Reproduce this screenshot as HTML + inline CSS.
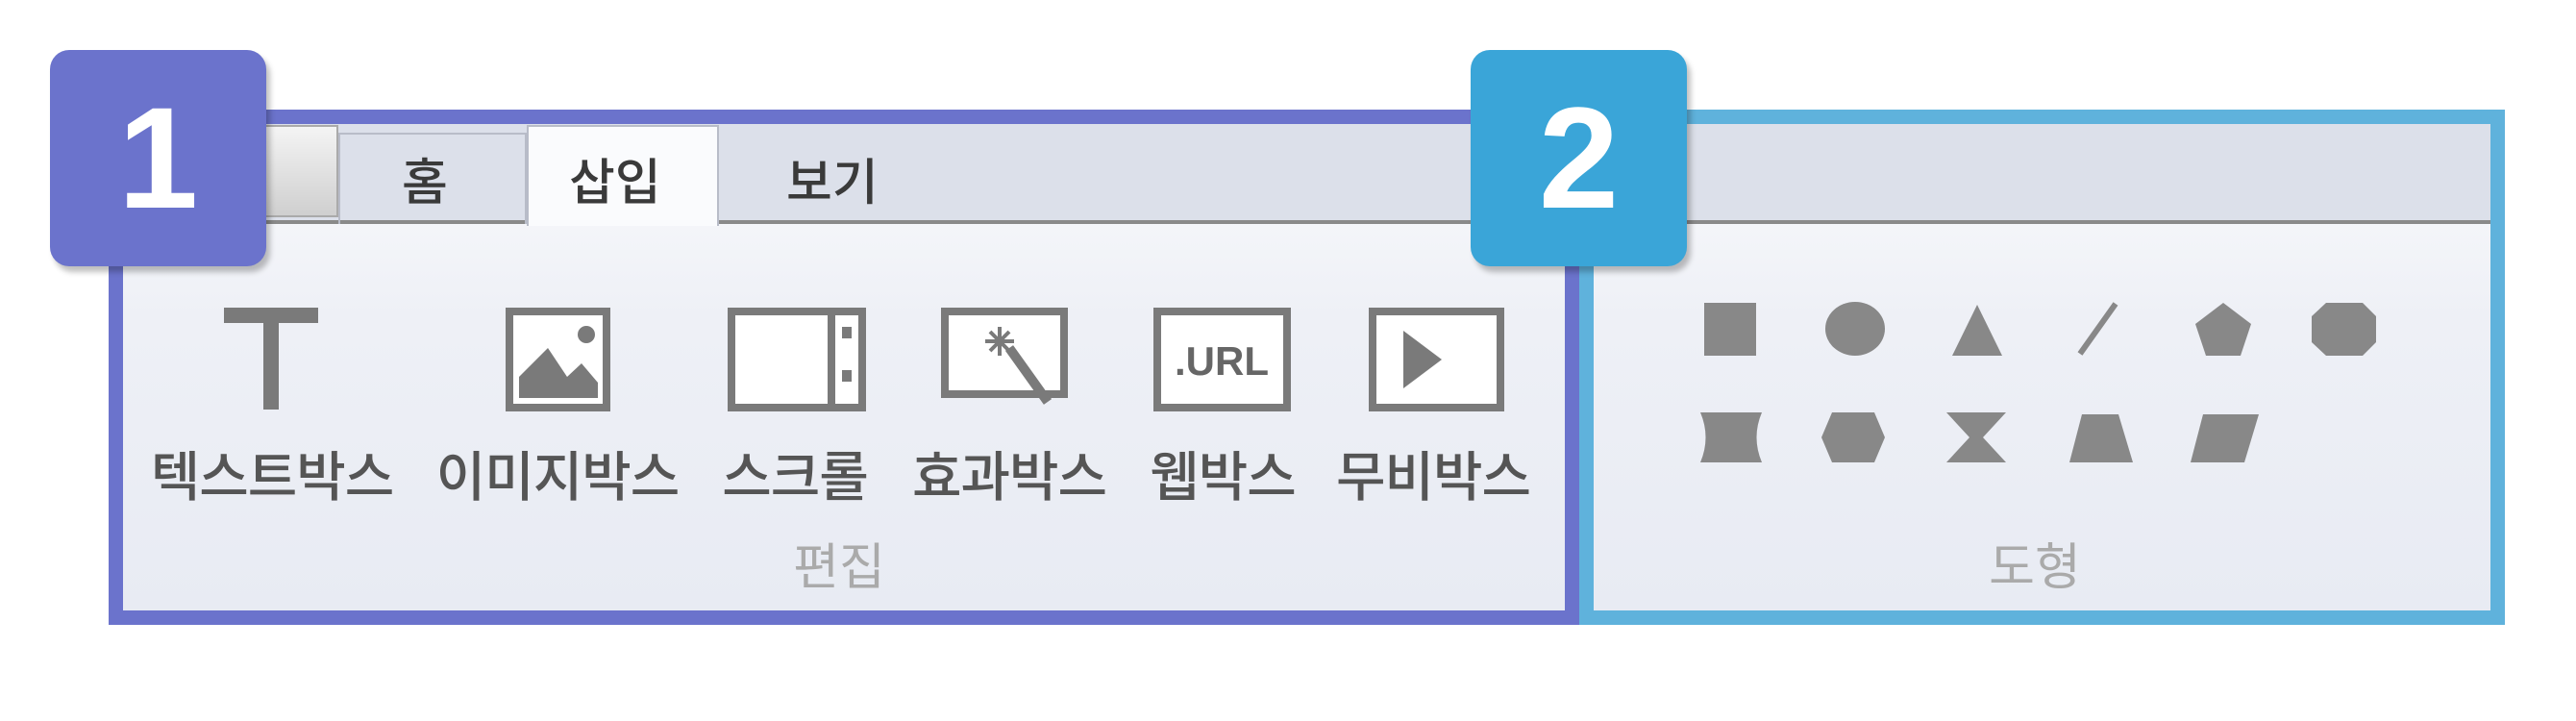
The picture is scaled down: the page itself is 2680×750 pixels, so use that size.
<!DOCTYPE html>
<html><head><meta charset="utf-8"><style>
*{margin:0;padding:0;box-sizing:border-box}
body{width:2680px;height:750px;background:#fff;position:relative;overflow:hidden;font-family:"Liberation Sans","Noto Sans CJK KR",sans-serif}
.a{position:absolute}
.panel{background:linear-gradient(#fafbfd 0%,#eef0f6 40%,#e8ebf3 100%)}
.tabbar{background:#dce0ea;border-bottom:4px solid #8a8a8a}
.lbl{position:absolute;top:452px;font-size:56px;font-weight:500;color:#555;white-space:nowrap;transform:translateX(-50%);letter-spacing:-1px}
.grp{position:absolute;top:548px;font-size:52px;color:#aaa;transform:translateX(-50%)}
.tab{position:absolute;top:148px;font-size:52px;color:#3a3a3a;font-weight:500}
.badge{position:absolute;width:225px;height:225px;border-radius:20px;color:#fff;font-size:150px;font-weight:bold;text-align:center;line-height:225px;box-shadow:4px 6px 6px rgba(0,0,0,.25)}
</style></head><body>
<div class="a panel" style="left:113px;top:114px;width:1530px;height:536px;border:15px solid #6b73cc"></div>
<div class="a tabbar" style="left:128px;top:129px;width:1500px;height:104px"></div>
<div class="a" style="left:270px;top:130px;width:82px;height:96px;background:linear-gradient(#f4f4f4,#cfcfcf);border:2px solid #aaa"></div>
<div class="a" style="left:352px;top:138px;width:196px;height:95px;border:2px solid #b8bcc8;border-bottom:none"></div>
<div class="a" style="left:548px;top:130px;width:200px;height:105px;background:#fafbfd;border:2px solid #b8bcc8;border-bottom:none"></div>
<div class="tab" style="left:418px">홈</div>
<div class="tab" style="left:592px">삽입</div>
<div class="tab" style="left:818px">보기</div>
<div class="a panel" style="left:1643px;top:114px;width:963px;height:536px;border:15px solid #5fb2dc"></div>
<div class="a tabbar" style="left:1658px;top:129px;width:933px;height:104px"></div>
<div class="a" style="left:1628px;top:114px;width:15px;height:536px;background:#6b73cc"></div>
<svg class="a" style="left:0;top:0" width="2680" height="750">
<g fill="#7a7a7a" stroke="none">
<rect x="233" y="320" width="98" height="16"/><rect x="274" y="320" width="16" height="106"/>
</g>
<g fill="#fff" stroke="#7a7a7a" stroke-width="8">
<rect x="530" y="324" width="101" height="100"/>
<rect x="761" y="324" width="136" height="100"/>
<rect x="983" y="324" width="124" height="86"/>
<rect x="1204" y="324" width="135" height="100"/>
<rect x="1428" y="324" width="133" height="100"/>
</g>
<g fill="#7a7a7a">
<path d="M540 414 L540 392 L570 362 L590 392 L605 378 L622 398 L622 414Z"/>
<circle cx="610" cy="348" r="9"/>
<rect x="861" y="324" width="8" height="100"/>
<rect x="876" y="340" width="10" height="12"/><rect x="876" y="385" width="10" height="12"/>
<path d="M1460 344 L1460 404 L1500 374Z"/>
</g>
<path d="M1050 362 L1090 418" stroke="#7a7a7a" stroke-width="10"/>
<g stroke="#7a7a7a" stroke-width="4"><path d="M1040 340v30M1025 355h30M1030 345l20 20M1050 345l-20 20"/></g>
<rect x="1215" y="345" width="113" height="55" fill="#fff"/>
<text x="1271" y="390" font-size="42" font-weight="bold" fill="#666" text-anchor="middle" font-family="Liberation Sans">.URL</text>
<g fill="#888">
<rect x="1773" y="315" width="54" height="55"/>
<ellipse cx="1930" cy="342" rx="31" ry="28"/>
<path d="M2057 317 L2083 370 L2031 370Z"/>
<path d="M2201 316 L2164 368" stroke="#888" stroke-width="6"/>
<path d="M2313 315 L2342 337 L2331 370 L2295 370 L2284 337Z"/>
<path d="M2420 315 L2458 315 L2472 329 L2472 356 L2458 370 L2420 370 L2405 356 L2405 329Z"/>
<path d="M1769 429 L1833 429 Q1822 455 1833 481 L1769 481 Q1780 455 1769 429Z"/>
<path d="M1906 429 L1950 429 L1961 455 L1950 481 L1906 481 L1895 455Z"/>
<path d="M2025 429 L2087 429 L2063 455 L2087 481 L2025 481 L2049 455Z"/>
<path d="M2166 431 L2204 431 L2219 481 L2153 481Z"/>
<path d="M2292 431 L2350 431 L2335 481 L2279 481Z"/>
</g>
</svg>
<div class="lbl" style="left:283px">텍스트박스</div>
<div class="lbl" style="left:580px">이미지박스</div>
<div class="lbl" style="left:827px">스크롤</div>
<div class="lbl" style="left:1050px">효과박스</div>
<div class="lbl" style="left:1272px">웹박스</div>
<div class="lbl" style="left:1491px">무비박스</div>
<div class="grp" style="left:873px">편집</div>
<div class="grp" style="left:2117px">도형</div>
<div class="badge" style="left:52px;top:52px;background:#6b73cc">1</div>
<div class="badge" style="left:1530px;top:52px;background:#3aa5d8">2</div>
</body></html>
